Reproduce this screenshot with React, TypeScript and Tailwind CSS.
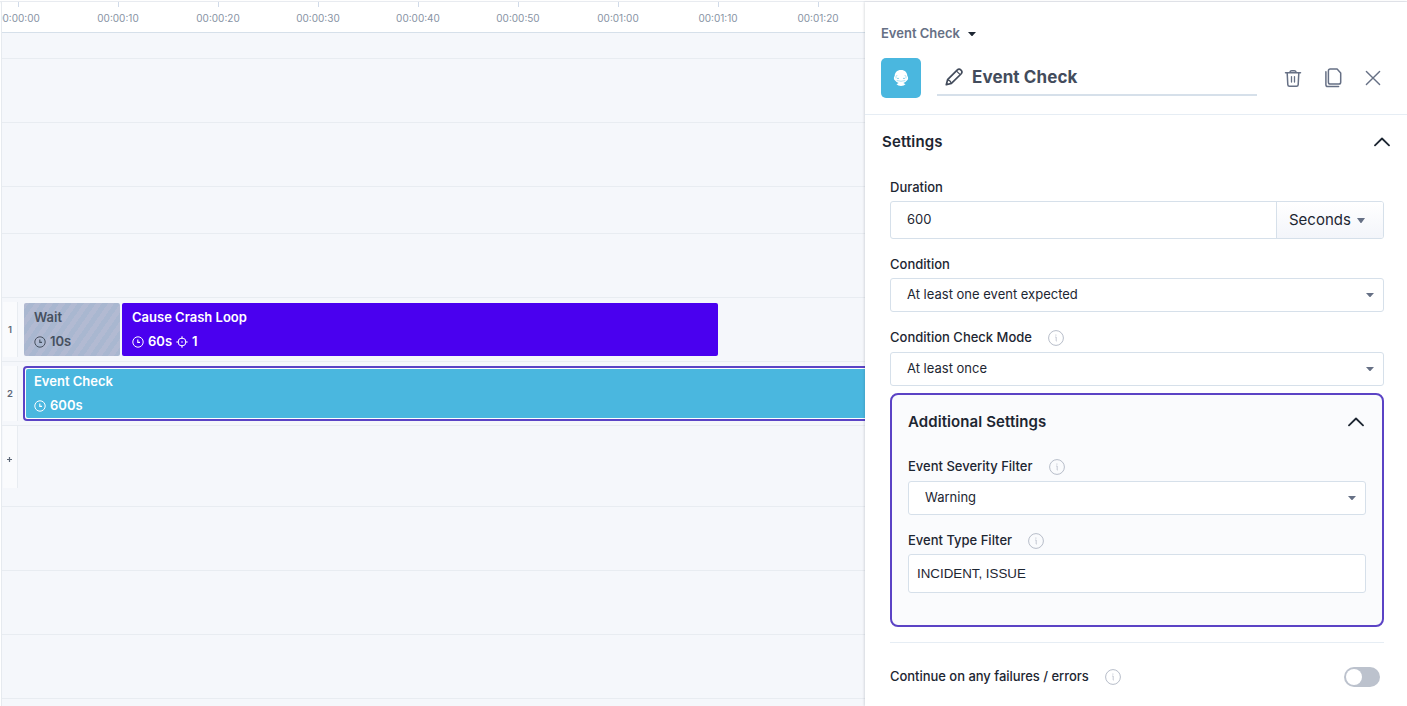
import type { ReactNode } from "react";

const ticks = [
  "00:00:00",
  "00:00:10",
  "00:00:20",
  "00:00:30",
  "00:00:40",
  "00:00:50",
  "00:01:00",
  "00:01:10",
  "00:01:20",
];

function ClockIcon() {
  return (
    <svg className="mt-px size-3 shrink-0" viewBox="0 0 12 12" fill="none" stroke="currentColor">
      <circle cx="6" cy="6" r="5.2" strokeWidth="1" />
      <path d="M5.8 3.4V6.4H8" strokeWidth="1.1" />
    </svg>
  );
}

function TargetIcon() {
  return (
    <svg className="mt-px size-3 shrink-0" viewBox="0 0 12 12" fill="none" stroke="currentColor">
      <circle cx="6" cy="6" r="3.9" strokeWidth="1" />
      <circle cx="6" cy="6" r="0.8" fill="currentColor" stroke="none" />
      <path d="M6 0.3V3.1M6 8.9V11.7M0.3 6H3.1M8.9 6H11.7" strokeWidth="1.1" />
    </svg>
  );
}

function InfoIcon() {
  return (
    <svg className="size-4 shrink-0 text-[#b7bdc9]" viewBox="0 0 16 16" fill="none" stroke="currentColor">
      <circle cx="8" cy="8" r="7.4" strokeWidth="1" />
      <path d="M7.2 7H8.2V10.6Q8.2 11.2 9 11.2" strokeWidth="0.8" />
      <circle cx="7.9" cy="5" r="0.6" fill="currentColor" stroke="none" />
    </svg>
  );
}

function Caret({ className }: { className: string }) {
  return (
    <svg className={className} viewBox="0 0 8 4" preserveAspectRatio="none" fill="currentColor">
      <path d="M0 0H8L4.6 3.7Q4 4.2 3.4 3.7Z" />
    </svg>
  );
}

function ChevronUp() {
  return (
    <svg className="h-[10px] w-4 text-[#1d2632]" viewBox="0 0 16 10" fill="none" stroke="currentColor">
      <path d="M1 8.4L8 1.5L15 8.4" strokeWidth="1.8" strokeLinecap="round" strokeLinejoin="round" />
    </svg>
  );
}

function Label({ children, info }: { children: ReactNode; info?: boolean }) {
  return (
    <div className="flex h-4 items-center gap-4 text-[13px] font-medium leading-4 whitespace-nowrap">
      <span>{children}</span>
      {info && (
        <span className="pt-px">
          <InfoIcon />
        </span>
      )}
    </div>
  );
}

function Select({ children }: { children: ReactNode }) {
  return (
    <div className="flex h-[34px] items-center justify-between rounded-[3px] border border-[#d6e0ea] bg-white pr-[9px] pb-px pl-4 text-[13px]">
      <span>{children}</span>
      <Caret className="mt-px h-1 w-[8px] text-[#667085]" />
    </div>
  );
}

function Gap({ className }: { className: string }) {
  return <div className={`shrink-0 border-b border-[#e8ecf1] ${className}`} />;
}

function Gutter({ children }: { children: ReactNode }) {
  return (
    <div className="flex h-full w-[15px] shrink-0 items-center justify-center border-r border-[#e8ecf1] bg-[#fafbfd] pt-px text-[9.5px] font-semibold text-[#5d6878]">
      {children}
    </div>
  );
}

function Timeline() {
  return (
    <section className="flex h-full w-[865px] shrink-0 flex-col overflow-hidden pl-px">
      <div className="flex h-full flex-col overflow-hidden border-l border-[#e6eaef] bg-[#f5f7fb]">
        <header className="flex h-[31px] shrink-0 border-b border-[#d6e0ea] bg-white">
          <div className="-ml-[33px] flex shrink-0">
            {ticks.map((tick) => (
              <div key={tick} className="flex w-[100px] shrink-0 flex-col items-center pr-px">
                <div className="h-[5px] w-px bg-[#d0dae8]" />
                <span className="mt-[5px] pr-px text-[10px] leading-3 text-[#8793a4]">{tick}</span>
              </div>
            ))}
          </div>
        </header>
        <Gap className="h-[26px]" />
        <Gap className="h-16" />
        <Gap className="h-16" />
        <Gap className="h-[47px]" />
        <Gap className="h-16" />
        <div className="flex h-16 shrink-0 border-b border-[#e8ecf1] py-1 pl-px">
          <Gutter>1</Gutter>
          <div className="mt-px ml-[6px] flex h-[53px] gap-[2px] text-[13px] font-semibold">
            <div className="flex w-24 flex-col gap-2 rounded-[2px] bg-[repeating-linear-gradient(-55deg,#a9b7d0_0px,#a9b7d0_5px,#b2bad2_5px,#b2bad2_10px)] px-[10px] pt-[6px] leading-4 text-[#46505f]">
              <span>Wait</span>
              <span className="flex items-center gap-1">
                <ClockIcon />
                10s
              </span>
            </div>
            <div className="flex w-[596px] flex-col gap-2 rounded-[2px] bg-[#4a00ef] px-[10px] pt-[6px] leading-4 text-white">
              <span>Cause Crash Loop</span>
              <span className="flex items-center gap-1">
                <ClockIcon />
                60s
                <TargetIcon />1
              </span>
            </div>
          </div>
        </div>
        <div className="flex h-16 shrink-0 border-b border-[#e8ecf1] py-1 pl-px">
          <Gutter>2</Gutter>
          <div className="ml-[5px] h-[55px] w-[900px] shrink-0 rounded-[4px] border-2 border-[#5b43c5] bg-white p-px">
            <div className="flex h-full flex-col gap-2 rounded-[2px] bg-[#4ab7df] pt-1 pl-2 text-[13px] leading-4 font-semibold text-white">
              <span>Event Check</span>
              <span className="flex items-center gap-1">
                <ClockIcon />
                600s
              </span>
            </div>
          </div>
        </div>
        <div className="flex h-[81px] shrink-0 border-b border-[#e8ecf1] pl-px">
          <div className="h-[62px] shrink-0">
            <Gutter>
              <svg className="mt-[3px] mr-px size-[5px]" viewBox="0 0 5 5" fill="none" stroke="currentColor">
                <path d="M2.5 0V5M0 2.5H5" strokeWidth="1.2" />
              </svg>
            </Gutter>
          </div>
        </div>
        <Gap className="h-16" />
        <Gap className="h-16" />
        <Gap className="h-16" />
      </div>
    </section>
  );
}

function PanelHeader() {
  return (
    <header className="h-[113px] shrink-0 border-b border-[#e6edf4] pt-[23px] pr-[26px] pl-4">
      <div className="flex h-4 items-center gap-2 text-[13px] leading-4 font-semibold text-[#667085]">
        Event Check
        <Caret className="mt-px h-1 w-[8px] text-[#1d2632]" />
      </div>
      <div className="mt-[17px] flex h-10 items-center">
        <div className="flex size-10 items-center justify-center rounded-[5px] bg-[#4ab7df]">
          <svg className="size-4" viewBox="0 0 16 16">
            <path d="M8 0C3.9 0 1.7 2.7 1.7 5.9Q.7 6.5.9 8.6Q1 10.2 2.1 10.4Q3.3 12.2 5.6 13L3.5 14.2Q5 16 8 16T12.5 14.2L10.4 13Q12.7 12.2 13.9 10.4Q15 10.2 15.1 8.6Q15.3 6.5 14.3 5.9C14.3 2.7 12.1 0 8 0Z" fill="#fff" />
            <path d="M3 8.4Q2.5 6.4 4.2 5M13 8.4Q13.5 6.4 11.8 5M3.7 10.5Q8 12 12.3 10.5" fill="none" stroke="#4ab7df" strokeWidth=".45" />
            <circle cx="5" cy="8.4" r=".65" fill="#4ab7df" />
            <circle cx="11" cy="8.4" r=".65" fill="#4ab7df" />
          </svg>
        </div>
        <div className="ml-4 flex h-[38px] w-80 items-center gap-[9px] self-start border-b-2 border-[#d6e0ea] pl-2 text-[17px] font-bold text-[#434c5c]">
          <svg className="mt-[2px] h-[18px] w-[18px]" viewBox="0 0 18 18" fill="none" stroke="currentColor" strokeWidth="1.7" strokeLinecap="round" strokeLinejoin="round">
            <path d="M1.3 16.7L2.6 11.6L12.1 2.1Q14.1 .3 16 2.1T16 6L6.4 15.4Z" />
            <path d="M2.6 11.8Q5.6 12.3 6.2 15.2" strokeWidth="1.2" />
            <path d="M11.8 3.3L14.7 6.2" strokeWidth="1.2" />
          </svg>
          <span className="pt-[3px] tracking-[0.006em]">Event Check</span>
        </div>
        <div className="ml-auto flex items-center gap-[21px] text-[#667085]">
          <svg className="mr-px -ml-px h-[19px] w-[18px]" viewBox="0 0 18 19" fill="none" stroke="currentColor" strokeWidth="1.5" strokeLinecap="round" strokeLinejoin="round">
            <path d="M1.5 3.7H16.5M5.8 3.4Q6.2 1.8 7.7 1.8H10.3Q11.8 1.8 12.2 3.4M3.2 4L3.8 15.6Q3.9 17.2 5.5 17.2H12.5Q14.1 17.2 14.2 15.6L14.8 4" />
            <path d="M7.5 7.6V13M10.5 7.6V13" strokeWidth="1.3" />
          </svg>
          <svg className="h-5 w-[18px]" viewBox="0 0 18 20" fill="none" stroke="currentColor" strokeWidth="1.5" strokeLinecap="round" strokeLinejoin="round">
            <path d="M6.2 1.1H13.1L16.7 4.9V14.2Q16.7 16 14.9 16H6.2Q4.4 16 4.4 14.2V2.9Q4.4 1.1 6.2 1.1Z" />
            <path d="M1.9 3.7V16.7Q1.9 18.5 3.7 18.5H14.6" />
          </svg>
          <svg className="ml-[2px] size-4" viewBox="0 0 16 16" fill="none" stroke="currentColor" strokeWidth="1.4" strokeLinecap="round">
            <path d="M1.4 1.4L14.6 14.6M14.6 1.4L1.4 14.6" />
          </svg>
        </div>
      </div>
    </header>
  );
}

function SettingsPanel() {
  return (
    <aside className="relative flex h-full min-w-0 flex-1 flex-col bg-white text-[#1d2632] shadow-[-1px_0_2px_rgba(30,40,60,0.14)]">
      <PanelHeader />
      <div className="mt-[19px] flex h-4 shrink-0 items-center justify-between px-[17px]">
        <h2 className="text-[15px] leading-4 font-semibold tracking-[0.01em]">Settings</h2>
        <ChevronUp />
      </div>
      <div className="mt-[29px] flex flex-col pr-[23px] pl-[25px]">
        <Label>Duration</Label>
        <div className="mt-[6px] flex h-[38px] overflow-hidden rounded-[3px] border border-[#d6e0ea]">
          <div className="flex flex-1 items-center pl-4 text-[13px]">600</div>
          <div className="flex w-[107px] items-center gap-[6px] border-l border-[#d6e0ea] bg-linear-to-b from-white to-[#f3f5fa] pl-3 text-[15px]">
            <span>Seconds</span>
            <Caret className="h-[5px] w-2 text-[#667085]" />
          </div>
        </div>
        <div className="mt-[17px]">
          <Label>Condition</Label>
        </div>
        <div className="mt-[6px]">
          <Select>At least one event expected</Select>
        </div>
        <div className="mt-[17px]">
          <Label info>Condition Check Mode</Label>
        </div>
        <div className="mt-[7px]">
          <Select>At least once</Select>
        </div>
        <div className="mt-[7px] flex h-[234px] flex-col rounded-[8px] border-2 border-[#5b43c5] bg-[#fafbfd] px-4">
          <div className="mt-[19px] flex h-4 items-center justify-between pr-[2px]">
            <h3 className="text-[15px] leading-4 font-semibold tracking-[0.006em]">Additional Settings</h3>
            <ChevronUp />
          </div>
          <div className="mt-[28px]">
            <Label info>Event Severity Filter</Label>
          </div>
          <div className="mt-[7px]">
            <Select>Warning</Select>
          </div>
          <div className="mt-[17px]">
            <Label info>Event Type Filter</Label>
          </div>
          <div className="mt-[6px] flex h-[39px] items-center rounded-[3px] border border-[#d6e0ea] bg-white pl-2 font-['Liberation_Sans',Arial,sans-serif] text-[13.33px]">
            INCIDENT, ISSUE
          </div>
        </div>
        <div className="mt-[15px] flex h-[60px] items-start justify-between border-t border-[#e6edf4] pt-[24px] pr-1">
          <div className="pt-px tracking-[-0.002em]">
            <Label info>Continue on any failures / errors</Label>
          </div>
          <div className="flex h-5 w-9 items-center rounded-full bg-[#bcc2cd] pl-[2px]">
            <div className="size-4 rounded-full bg-white" />
          </div>
        </div>
      </div>
    </aside>
  );
}

export default function App() {
  return (
    <main className="flex h-[706px] w-[1407px] flex-col overflow-hidden bg-white font-['Inter',sans-serif]">
      <div className="mt-px h-px shrink-0 bg-[#e8ebf0] shadow-[0_1px_2px_rgba(30,40,60,0.08)]" />
      <div className="flex min-h-0 flex-1">
        <Timeline />
        <SettingsPanel />
      </div>
    </main>
  );
}
